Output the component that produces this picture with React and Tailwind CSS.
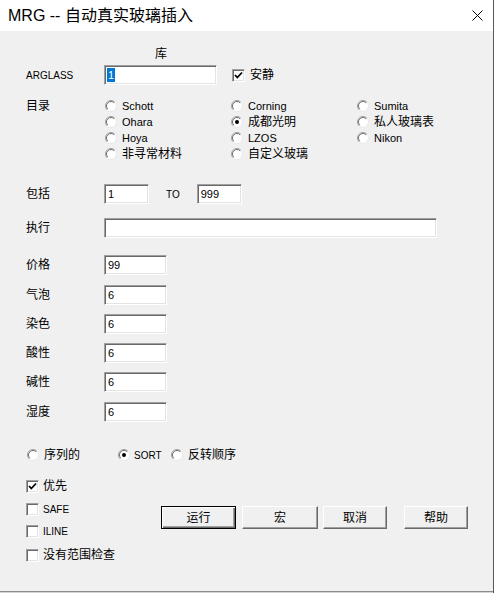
import React from 'react';

const Radio = ({ checked }) => (
  <svg width="12" height="12" viewBox="0 0 12 12" className="shrink-0">
    <circle cx="6" cy="6" r="5.5" fill="#fff" />
    <path d="M2.1 9.9 A5.5 5.5 0 0 1 9.9 2.1" fill="none" stroke="#a0a0a0" strokeWidth="1" />
    <path d="M9.9 2.1 A5.5 5.5 0 0 1 2.1 9.9" fill="none" stroke="#e8e8e8" strokeWidth="1" />
    <path d="M2.8 9.2 A4.5 4.5 0 0 1 9.2 2.8" fill="none" stroke="#6d6d6d" strokeWidth="1" />
    {checked && <circle cx="6" cy="6" r="2" fill="#000" />}
  </svg>
);

const Check = ({ checked }) => (
  <div className="w-[13px] h-[13px] shrink-0 bg-white border border-t-[#a0a0a0] border-l-[#a0a0a0] border-b-white border-r-white shadow-[inset_1px_1px_0_#696969,inset_-1px_-1px_0_#e3e3e3] flex items-center justify-center">
    {checked && (
      <svg width="9" height="9" viewBox="0 0 9 9">
        <path d="M1 4 L3.3 6.5 L8 1.5" fill="none" stroke="#000" strokeWidth="1.8" />
      </svg>
    )}
  </div>
);

const Field = ({ w, value, selected }) => (
  <div
    className={`${w} h-[20px] shrink-0 bg-white border border-t-[#a0a0a0] border-l-[#a0a0a0] border-b-white border-r-white shadow-[inset_1px_1px_0_#696969,inset_-1px_-1px_0_#e3e3e3] flex items-center pl-[2px] text-[11px] leading-[14px]`}
  >
    {selected ? (
      <span className="bg-[#0078d7] text-white px-[1px] h-[14px]">{value}</span>
    ) : (
      <span className="pl-[1px]">{value}</span>
    )}
  </div>
);

const Btn = ({ w, label, primary }) => (
  <button
    className={`${w} h-[23px] bg-[#f0f0f0] text-[12px] leading-none flex items-center justify-center ${
      primary
        ? 'border border-black shadow-[inset_1px_1px_0_#fff,inset_-1px_-1px_0_#696969,inset_-2px_-2px_0_#a0a0a0]'
        : 'border border-t-white border-l-white border-b-[#696969] border-r-[#696969] shadow-[inset_-1px_-1px_0_#a0a0a0]'
    }`}
  >
    {label}
  </button>
);

const catalogs = [
  { name: 'Schott' },
  { name: 'Corning' },
  { name: 'Sumita' },
  { name: 'Ohara' },
  { name: '成都光明', checked: true },
  { name: '私人玻璃表' },
  { name: 'Hoya' },
  { name: 'LZOS' },
  { name: 'Nikon' },
  { name: '非寻常材料' },
  { name: '自定义玻璃' },
];

const limits = [
  { label: '价格', value: '99', mt: 'mt-[17px]' },
  { label: '气泡', value: '6', mt: 'mt-[10px]' },
  { label: '染色', value: '6', mt: 'mt-[9px]' },
  { label: '酸性', value: '6', mt: 'mt-[9px]' },
  { label: '碱性', value: '6', mt: 'mt-[9px]' },
  { label: '湿度', value: '6', mt: 'mt-[10px]' },
];

const options = [
  { label: 'SAFE', checked: false, caps: true, mt: 'mt-[7px]' },
  { label: 'ILINE', checked: false, caps: true, mt: 'mt-[6px]' },
  { label: '没有范围检查', checked: false, mt: 'mt-[8px]' },
];

export default function App() {
  return (
    <div className="w-[494px] h-[593px] flex flex-col bg-[#f0f0f0] border-r border-[#5a5a5a] text-black font-['Liberation_Sans','Noto_Sans_CJK_SC',sans-serif] overflow-hidden">
      {/* title bar */}
      <div className="h-[31px] shrink-0 bg-white flex items-center justify-between pl-[8px] pr-[10px]">
        <span className="text-[16px] leading-none">MRG -- 自动真实玻璃插入</span>
        <svg width="11" height="11" viewBox="0 0 11 11">
          <path d="M0.5 0.5 L10.5 10.5 M10.5 0.5 L0.5 10.5" stroke="#000" strokeWidth="1" />
        </svg>
      </div>

      {/* body */}
      <div className="flex-1 pl-[26px]">
        <div className="mt-[15px] h-[16px] pl-[129px] text-[12px] leading-[16px]">库</div>

        <div className="mt-[3px] h-[20px] flex items-center">
          <span className="w-[78px] text-[10px]">ARGLASS</span>
          <Field w="w-[113px]" value="1" selected />
          <div className="ml-[15px] flex items-center gap-[5px]">
            <Check checked />
            <span className="text-[12px]">安静</span>
          </div>
        </div>

        <div className="mt-[13px] flex">
          <span className="w-[78px] h-[16px] text-[12px] leading-[16px]">目录</span>
          <div className="grid grid-cols-[126px_126px_126px] auto-rows-[16px]">
            {catalogs.map((c) => (
              <div key={c.name} className="flex items-center gap-[5px] pl-[1px]">
                <Radio checked={c.checked} />
                <span className={/[A-Za-z]/.test(c.name) ? 'text-[11px]' : 'text-[12px]'}>{c.name}</span>
              </div>
            ))}
          </div>
        </div>

        <div className="mt-[22px] h-[20px] flex items-center">
          <span className="w-[78px] text-[12px]">包括</span>
          <Field w="w-[45px]" value="1" />
          <span className="ml-[17px] text-[10px]">TO</span>
          <div className="ml-[17px]">
            <Field w="w-[45px]" value="999" />
          </div>
        </div>

        <div className="mt-[14px] h-[20px] flex items-center">
          <span className="w-[78px] text-[12px]">执行</span>
          <Field w="w-[333px]" value="" />
        </div>

        {limits.map((l) => (
          <div key={l.label} className={`${l.mt} h-[20px] flex items-center`}>
            <span className="w-[78px] text-[12px]">{l.label}</span>
            <Field w="w-[63px]" value={l.value} />
          </div>
        ))}

        <div className="mt-[25px] h-[16px] flex items-center text-[12px]">
          <div className="w-[92px] flex items-center gap-[5px] pl-[1px]">
            <Radio />
            <span>序列的</span>
          </div>
          <div className="w-[53px] flex items-center gap-[4px]">
            <Radio checked />
            <span className="text-[10px]">SORT</span>
          </div>
          <div className="flex items-center gap-[5px]">
            <Radio />
            <span>反转顺序</span>
          </div>
        </div>

        <div className="mt-[15px] flex">
          <div className="w-[135px] flex flex-col">
            <div className="h-[16px] flex items-center gap-[4px]">
              <Check checked />
              <span className="text-[12px]">优先</span>
            </div>
            {options.map((o) => (
              <div key={o.label} className={`${o.mt} h-[16px] flex items-center gap-[4px]`}>
                <Check checked={o.checked} />
                <span className={o.caps ? 'text-[10px]' : 'text-[12px]'}>{o.label}</span>
              </div>
            ))}
          </div>
          <div className="pt-[28px] flex items-start">
            <Btn w="w-[75px]" label="运行" primary />
            <div className="ml-[6px]">
              <Btn w="w-[76px]" label="宏" />
            </div>
            <div className="ml-[5px]">
              <Btn w="w-[64px]" label="取消" />
            </div>
            <div className="ml-[17px]">
              <Btn w="w-[64px]" label="帮助" />
            </div>
          </div>
        </div>
      </div>

      <div className="h-[1px] shrink-0 bg-[#8c8c8c]" />
      <div className="h-[1px] shrink-0 bg-[#d4d4d4]" />
    </div>
  );
}
